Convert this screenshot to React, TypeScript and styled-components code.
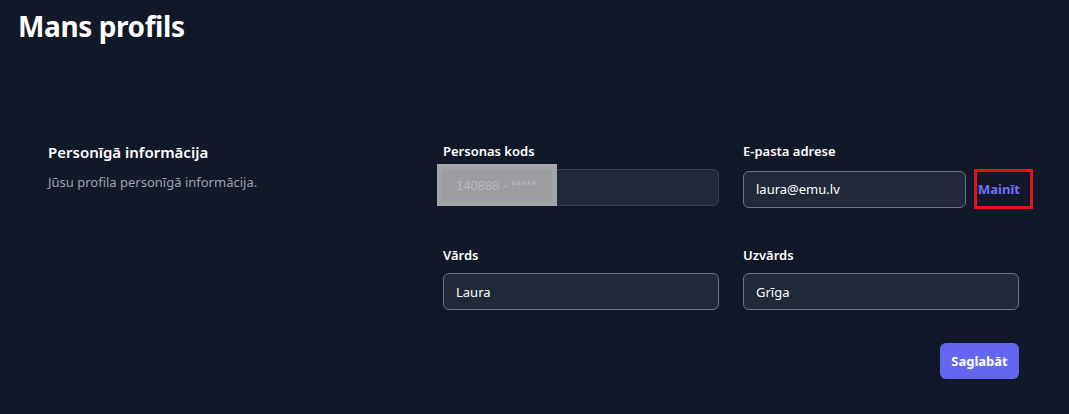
import React from 'react';
import styled, { createGlobalStyle } from 'styled-components';

const GlobalStyle = createGlobalStyle`
  html, body {
    margin: 0;
    padding: 0;
    background: #111827;
    font-family: 'Noto Sans', 'Open Sans', sans-serif;
    color: #ffffff;
  }
  * { box-sizing: border-box; }
`;

const Page = styled.div`
  width: 1069px;
  height: 414px;
  background: #111827;
  overflow: hidden;
`;

const Title = styled.h1`
  margin: 0;
  padding: 7px 0 0 18px;
  font-size: 28px;
  line-height: 38px;
  font-weight: 700;
  letter-spacing: -0.4px;
  color: #ffffff;
`;

const Section = styled.section`
  display: grid;
  grid-template-columns: 395px 576px;
  padding: 96px 0 0 48px;
`;

const Intro = styled.div`
  display: flex;
  flex-direction: column;
  gap: 9px;
`;

const IntroTitle = styled.h2`
  margin: 0;
  font-size: 15px;
  line-height: 22px;
  font-weight: 600;
  color: #ffffff;
`;

const IntroText = styled.p`
  margin: 0;
  font-size: 13px;
  line-height: 20px;
  color: #9ca3af;
`;

const Fields = styled.div`
  display: grid;
  grid-template-columns: 276px 276px;
  column-gap: 24px;
  row-gap: 36px;
`;

const Field = styled.div`
  display: flex;
  flex-direction: column;
  gap: 8px;
`;

const Label = styled.label`
  font-size: 13px;
  line-height: 20px;
  font-weight: 600;
  color: #ffffff;
`;

const InputRow = styled.div`
  display: flex;
  align-items: center;
  gap: 8px;
  width: 300px;
`;

const Input = styled.div<{ $disabled?: boolean; $width?: number }>`
  position: relative;
  height: 37px;
  width: ${({ $width }) => ($width ? `${$width}px` : '100%')};
  flex: none;
  display: flex;
  align-items: center;
  padding: 0 12px;
  border-radius: 6px;
  background: #1f2937;
  border: 1px solid ${({ $disabled }) => ($disabled ? '#374151' : '#6b7280')};
  font-size: 13px;
  color: #ffffff;
`;

const Redacted = styled.div`
  position: absolute;
  left: -7px;
  top: -6px;
  width: 120px;
  height: 42px;
  background: #a4a5a7;
  padding: 5px;
`;

const RedactedInner = styled.div`
  width: 100%;
  height: 100%;
  background: #9c9ea1;
  display: flex;
  align-items: center;
  padding-left: 14px;
  font-family: 'Liberation Sans', Arial, sans-serif;
  font-size: 13px;
  color: #b9babc;
`;

const ChangeLink = styled.a`
  display: flex;
  align-items: center;
  height: 40px;
  padding: 0 10px 0 1px;
  border: 3px solid #e3121b;
  font-size: 13px;
  font-weight: 700;
  color: #6f73f5;
  text-decoration: none;
`;

const Actions = styled.div`
  grid-column: 1 / 3;
  display: flex;
  justify-content: flex-end;
  margin-top: -3px;
`;

const SaveButton = styled.button`
  height: 36px;
  width: 79px;
  border: none;
  border-radius: 6px;
  background: #6366f1;
  color: #ffffff;
  font-family: inherit;
  font-size: 13px;
  font-weight: 700;
  cursor: pointer;
`;

export default function App() {
  return (
    <Page>
      <GlobalStyle />
      <Title>Mans profils</Title>
      <Section>
        <Intro>
          <IntroTitle>Personīgā informācija</IntroTitle>
          <IntroText>Jūsu profila personīgā informācija.</IntroText>
        </Intro>
        <Fields>
          <Field>
            <Label>Personas kods</Label>
            <Input $disabled>
              <Redacted>
                <RedactedInner>140888 - *****</RedactedInner>
              </Redacted>
            </Input>
          </Field>
          <Field>
            <Label>E-pasta adrese</Label>
            <InputRow>
              <Input $width={223}>laura@emu.lv</Input>
              <ChangeLink href="#">Mainīt</ChangeLink>
            </InputRow>
          </Field>
          <Field>
            <Label>Vārds</Label>
            <Input>Laura</Input>
          </Field>
          <Field>
            <Label>Uzvārds</Label>
            <Input>Grīga</Input>
          </Field>
          <Actions>
            <SaveButton>Saglabāt</SaveButton>
          </Actions>
        </Fields>
      </Section>
    </Page>
  );
}
